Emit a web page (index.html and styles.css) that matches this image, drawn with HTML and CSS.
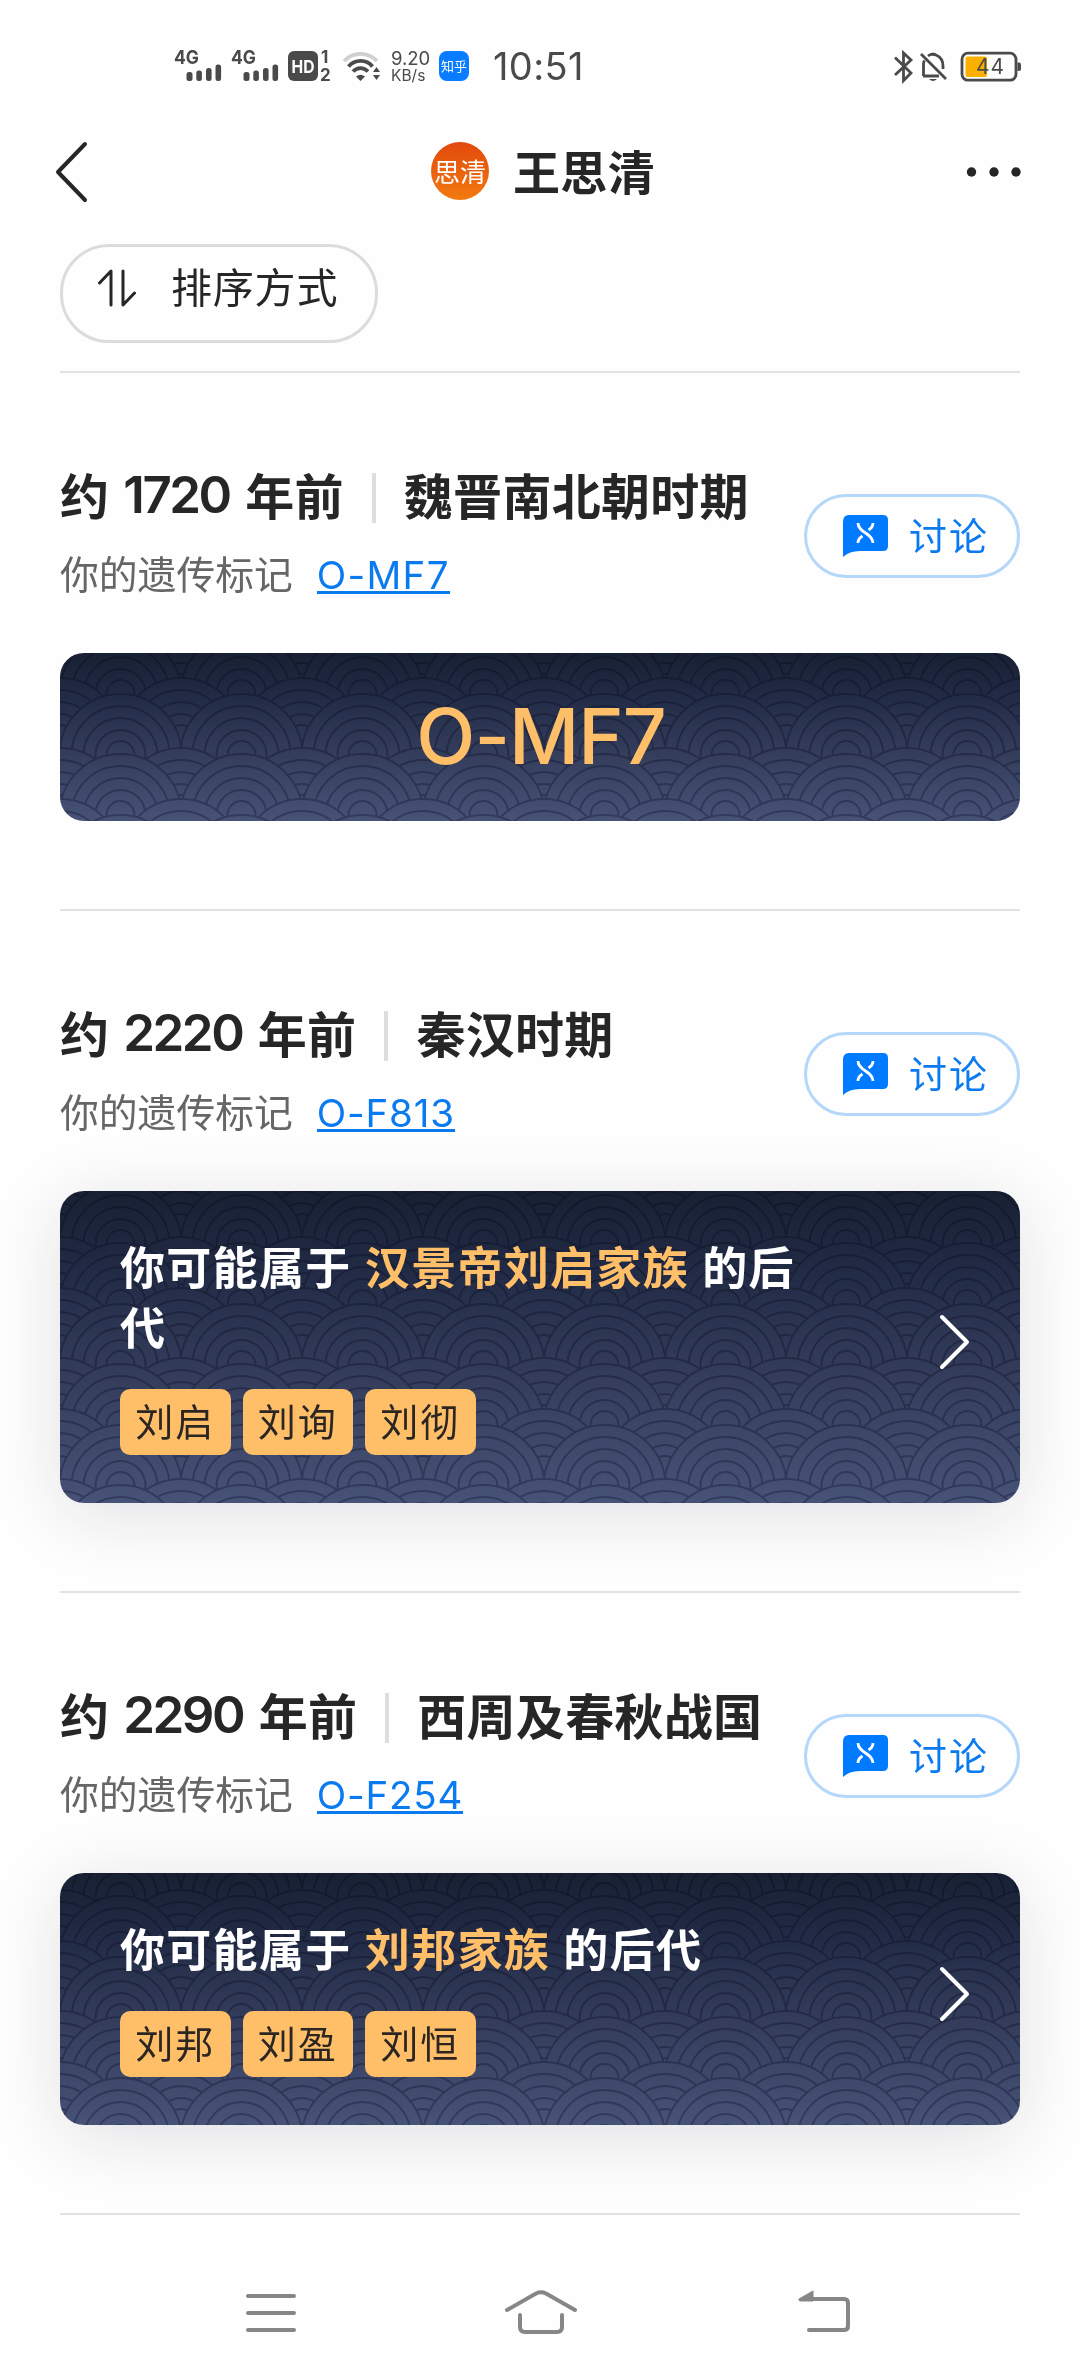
FILE: index.html
```html
<!DOCTYPE html>
<html lang="zh-CN">
<head>
<meta charset="utf-8">
<title>王思清</title>
<link rel="stylesheet" href="styles.css">
</head>
<body>
<svg class="defs" width="0" height="0" aria-hidden="true">
  <defs>
    <g id="fan" class="fan">
      <circle r="61"/><circle r="49"/><circle r="37"/><circle r="25"/><circle r="14"/>
    </g>
    <g id="row-even"><use href="#fan" x="-60.5"/><use href="#fan" x="60.5"/><use href="#fan" x="181.5"/></g>
    <g id="row-odd"><use href="#fan" x="0"/><use href="#fan" x="121"/></g>
    <pattern id="waves" width="121" height="121" patternUnits="userSpaceOnUse" patternTransform="translate(0 60)">
      <use href="#row-odd" y="-25"/><use href="#row-even" y="-19"/>
      <use href="#row-odd" y="26"/><use href="#row-even" y="42"/>
      <use href="#row-odd" y="96"/><use href="#row-even" y="102"/>
      <use href="#row-odd" y="147"/><use href="#row-even" y="163"/>
    </pattern>
    <pattern id="waves-tall" href="#waves" patternTransform="translate(0 11)"/>
    <pattern id="waves-short" href="#waves" patternTransform="translate(0 103)"/>
    <symbol id="bars" viewBox="0 0 48 32">
      <text class="sig-label" x="0" y="14" textLength="25" lengthAdjust="spacingAndGlyphs">4G</text>
      <rect x="12.5" y="22" width="6" height="9" rx="2.5"/><rect x="22.3" y="20.500" width="5.600" height="10.500" rx="2.500"/><rect x="32" y="18" width="5.600" height="13" rx="2.500"/><rect x="41.500" y="14.500" width="5.600" height="16.500" rx="2.500"/>
    </symbol>
    <symbol id="chat" viewBox="0 0 45 42">
      <path fill="#007bff" d="M6 0H40Q45 0 45 5V31Q45 36 40 36H17Q6 36 0 42V7Q0 0 6 0Z"/>
      <path fill="none" stroke="#fff" stroke-width="2.800" d="M15 8C15 18 30 18 30 28M30 8C30 11.500 28 13.500 25.500 15M15 28C15 24.500 17 22.500 19.500 21"/>
    </symbol>
  </defs>
</svg>

<div class="status">
  <svg class="signal" width="48" height="32"><use href="#bars"/></svg>
  <svg class="signal" width="48" height="32"><use href="#bars"/></svg>
  <svg class="hd" width="44" height="32" viewBox="0 0 44 32">
    <rect x="0" y="1" width="30" height="30" rx="6"/>
    <text class="hd-label" x="3.500" y="22.500" textLength="23" lengthAdjust="spacingAndGlyphs">HD</text>
    <text class="sim" x="33" y="12.500">1</text><text class="sim" x="32" y="31">2</text>
  </svg>
  <svg class="wifi" width="38" height="32" viewBox="0 0 38 32">
    <g fill="none" stroke-width="3.800">
      <path stroke="#d0d0d0" d="M1 11C10 1.500 25 1.500 34 11"/>
      <path stroke="#4a4a4a" d="M5.500 16.500C12 9 23.500 9 29.500 16.500"/>
      <path stroke="#4a4a4a" d="M10 21.500C14.500 17 20.500 17 25 21.500"/>
    </g>
    <path d="M13 26.500Q17.500 23 22 26.500L17.500 31ZM30 22L33.500 17L37 22ZM30 25L33.500 30L37 25Z"/>
  </svg>
  <div class="speed"><span class="rate">9.20</span><span class="unit">KB/s</span></div>
  <span class="zhihu">知乎</span>
  <span class="clock">10:51</span>
  <svg class="tray" width="128" height="34" viewBox="0 0 128 34">
    <path class="line" d="M2 7.500L18 23L10.500 30.500V3L18 10L2 25"/>
    <path class="line" d="M28 4L53 29M35 6Q38 3.500 43 5Q50 8 50 16V19M30.500 26V14Q30.500 12 31.500 10.500M30 26H46"/>
    <path d="M36 29H44Q40 33 36 29ZM35.500 5Q40 0 44.500 5Z"/>
    <rect class="line" x="69" y="3.200" width="54" height="27" rx="6"/>
    <rect x="72.500" y="6.500" width="21.500" height="20.500" rx="2" fill="#fbb000"/>
    <path d="M124.500 12.500H126Q128 12.500 128 14.500V19Q128 21 126 21H124.500Z"/>
    <text class="level" x="83" y="24" textLength="28">44</text>
  </svg>
</div>

<header class="top">
  <svg class="back" width="36" height="62" viewBox="0 0 36 62"><path d="M32 3L5 31L32 59"/></svg>
  <div class="who"><span class="avatar">思清</span><h1>王思清</h1></div>
  <svg class="more" width="56" height="12" viewBox="0 0 56 12"><circle cx="6.500" cy="6" r="4.700"/><circle cx="29" cy="6" r="4.700"/><circle cx="51" cy="6" r="4.700"/></svg>
</header>

<div class="tools">
  <button class="sort">
    <svg width="38" height="38" viewBox="0 0 38 38"><path d="M1.500 14L13 2V36M25 2V36L36.500 24"/></svg>
    <span>排序方式</span>
  </button>
</div>

<main>
  <section class="era">
    <div class="head">
      <div>
        <h2>约<b>1720</b>年前<i></i>魏晋南北朝时期</h2>
        <p>你的遗传标记<a class="mark wide">O-MF7</a></p>
      </div>
      <button class="talk"><svg width="45" height="42"><use href="#chat"/></svg><span>讨论</span></button>
    </div>
    <div class="card plain">
      <svg class="waves" width="960" height="168"><rect width="960" height="168" fill="url(#waves)"/></svg>
      <strong>O-MF7</strong>
    </div>
  </section>

  <section class="era">
    <div class="head">
      <div>
        <h2>约<b>2220</b>年前<i></i>秦汉时期</h2>
        <p>你的遗传标记<a class="mark">O-F813</a></p>
      </div>
      <button class="talk"><svg width="45" height="42"><use href="#chat"/></svg><span>讨论</span></button>
    </div>
    <div class="card raised">
      <svg class="waves" width="960" height="312"><rect width="960" height="312" fill="url(#waves-tall)"/></svg>
      <div class="body">
        <h3>你可能属于 <em>汉景帝刘启家族</em> 的后代</h3>
        <div class="tags"><span>刘启</span><span>刘询</span><span>刘彻</span></div>
      </div>
      <svg class="go" width="32" height="56" viewBox="0 0 32 56"><path d="M3 3L28 28L3 53"/></svg>
    </div>
  </section>

  <section class="era">
    <div class="head">
      <div>
        <h2>约<b>2290</b>年前<i></i>西周及春秋战国</h2>
        <p>你的遗传标记<a class="mark">O-F254</a></p>
      </div>
      <button class="talk"><svg width="45" height="42"><use href="#chat"/></svg><span>讨论</span></button>
    </div>
    <div class="card raised">
      <svg class="waves" width="960" height="252"><rect width="960" height="252" fill="url(#waves-short)"/></svg>
      <div class="body">
        <h3>你可能属于 <em>刘邦家族</em> 的后代</h3>
        <div class="tags"><span>刘邦</span><span>刘盈</span><span>刘恒</span></div>
      </div>
      <svg class="go" width="32" height="56" viewBox="0 0 32 56"><path d="M3 3L28 28L3 53"/></svg>
    </div>
  </section>
</main>

<nav class="keys">
  <svg width="54" height="48" viewBox="0 0 54 48"><path d="M4 7H50M4 24H50M4 41H50"/></svg>
  <svg class="home" width="76" height="48" viewBox="0 0 76 48"><path d="M4 21L33 4.500Q38 2 43 4.500L72 21M17 26V38Q17 43 22 43H54Q59 43 59 38V26"/></svg>
  <svg width="54" height="48" viewBox="0 0 54 48"><path d="M14 10H46Q50 10 50 14V37Q50 41 46 41H11"/><path class="tip" d="M1 10L15 2V12H2Z"/></svg>
</nav>
</body>
</html>
```
FILE: styles.css
```css
* { box-sizing: border-box; }
body {
  margin: 0;
  width: 1080px;
  height: 2376px;
  overflow: hidden;
  display: flex;
  flex-direction: column;
  background: #fefefe;
  color: #262626;
  font-family: "Noto Sans CJK SC", sans-serif;
}
svg { display: block; flex: none; }
.defs { position: absolute; }
h1, h2, h3, p { margin: 0; }
button { background: none; padding: 0; font: inherit; color: inherit; }

/* status bar */
.status {
  height: 132px;
  flex: none;
  display: flex;
  align-items: flex-start;
  padding: 50px 59px 0 174px;
  fill: #4a4a4a;
  color: #4a4a4a;
  white-space: nowrap;
}
.status svg { overflow: visible; }
.sig-label { font: 700 19px Inter, sans-serif; }
.signal { margin-right: 9px; }
.hd-label { font: 700 18px Inter, sans-serif; fill: #fff; }
.sim { font: 700 17px Inter, sans-serif; }
.wifi { margin-left: 11px; }
.speed {
  display: flex;
  flex-direction: column;
  width: 58px;
  padding-left: 10px;
  font-family: Inter, sans-serif;
}
.rate { font-size: 18.500px; line-height: 17px; }
.unit { font-size: 15.500px; line-height: 17px; }
.zhihu {
  width: 30px;
  height: 30px;
  margin-top: 1px;
  border-radius: 8px;
  background: #0a7cff;
  color: #fff;
  font-size: 13px;
  line-height: 29px;
  text-align: center;
}
.clock {
  width: 110px;
  margin: -7px 0 0 24px;
  font: 400 38px/46px Inter, sans-serif;
  letter-spacing: .4px;
}
.tray { margin-left: auto; }
.line { fill: none; stroke: #4a4a4a; stroke-width: 2.800; }
.level { font: 400 21px Inter, sans-serif; }

/* title bar */
.top {
  height: 80px;
  flex: none;
  display: flex;
  align-items: center;
  justify-content: space-between;
  padding: 0 59px 0 53px;
}
.back { fill: none; stroke: #262626; stroke-width: 4; stroke-linecap: round; stroke-linejoin: round; }
.who { display: flex; align-items: center; gap: 24px; padding-left: 32px; margin-top: -2px; }
.avatar {
  width: 58px;
  height: 58px;
  border-radius: 50%;
  background: linear-gradient(#e2490c, #f27a10);
  color: #fff;
  font-size: 26px;
  line-height: 58px;
  text-align: center;
  white-space: nowrap;
}
h1 { font-size: 47px; font-weight: 700; line-height: 60px; margin-top: -2px; letter-spacing: .3px; }
.more { fill: #262626; }

.tools { height: 159px; flex: none; padding: 32px 60px 0; }
.sort {
  display: flex;
  align-items: center;
  width: 318px;
  height: 99px;
  padding: 0 0 11px 35px;
  gap: 35px;
  border: 3px solid #dcdcdc;
  border-radius: 49px;
  font-size: 41px;
  letter-spacing: .8px;
  white-space: nowrap;
}
.sort span { margin-top: -7px; }
.sort svg { fill: none; stroke: #262626; stroke-width: 3; stroke-linecap: round; stroke-linejoin: round; }

/* timeline sections */
main { margin: 0 60px; flex: none; border-bottom: 2px solid #e2e2e2; }
.era { border-top: 2px solid #e2e2e2; padding-bottom: 88px; }
.head { display: flex; justify-content: space-between; height: 280px; padding-top: 87px; }
.talk {
  display: flex;
  align-items: center;
  width: 216px;
  height: 84px;
  margin-top: 34px;
  padding-left: 36px;
  gap: 21px;
  border: 3px solid #b5d7f9;
  border-radius: 42px;
  color: #0a7af0;
  font-size: 38px;
  letter-spacing: 2px;
  white-space: nowrap;
}
.talk span { margin-top: -5px; }
h2 {
  display: flex;
  align-items: center;
  height: 66px;
  font-size: 49px;
  font-weight: 700;
  letter-spacing: .3px;
  white-space: nowrap;
}
h2 b { font: 600 51px/66px Inter, sans-serif; letter-spacing: -2.500px; margin: 3px 15.500px 0 14px; }
h2 i { width: 4px; height: 50px; margin: 9px 28px 0; background: #dedede; }
p { display: flex; align-items: center; height: 60px; margin-top: 16px; color: #666; font-size: 38.800px; white-space: nowrap; }
.mark {
  margin-left: 24px;
  height: 40px;
  margin-top: 3px;
  border-bottom: 3px solid #0a7af0;
  color: #0a7af0;
  font: 400 38.500px/42px Inter, sans-serif;
  letter-spacing: .8px;
}
.wide { letter-spacing: 1.300px; }

.card {
  position: relative;
  border-radius: 24px;
  background: linear-gradient(#182033, #232c47 28%, #333c5a 58%, #475277);
}
.waves { position: absolute; inset: 0; border-radius: 24px; overflow: hidden; mix-blend-mode: multiply; }
.fan { fill: #fff; stroke: #b8b8ca; stroke-width: 2; }
.plain { height: 168px; display: flex; align-items: center; justify-content: center; }
.plain strong { position: relative; margin-top: -2px; color: #ffbf69; font: 550 77px Inter, sans-serif; letter-spacing: -1px; padding-left: 2px; }
.raised {
  display: flex;
  align-items: center;
  justify-content: space-between;
  padding: 45px 49px 49px 60px;
  box-shadow: 0 12px 72px rgba(24, 24, 50, .13);
}
.body { position: relative; width: 700px; }
h3 { color: #fff; font-size: 45px; font-weight: 700; line-height: 60px; letter-spacing: 1.300px; word-spacing: 1.800px; }
h3 em { font-style: normal; color: #ffbf69; }
.tags { display: flex; gap: 12px; margin-top: 33px; margin-bottom: -1px; }
.tags span {
  width: 110.500px;
  height: 66px;
  border-radius: 10px;
  background: #ffbf69;
  color: #2c2622;
  font-size: 38px;
  line-height: 62px;
  letter-spacing: 2px;
  text-align: center;
  white-space: nowrap;
}
.go { position: relative; margin-bottom: 6px; fill: none; stroke: #fff; stroke-width: 4; stroke-linecap: round; stroke-linejoin: round; }

/* system navigation */
.keys { display: flex; align-items: center; justify-content: space-between; margin: 74px 228px 0 244px; }
.keys .home { margin-right: 14px; }
.keys svg { fill: none; stroke: #868686; stroke-width: 4; stroke-linecap: round; }
.keys .tip { fill: #868686; stroke-width: 1; }
```
